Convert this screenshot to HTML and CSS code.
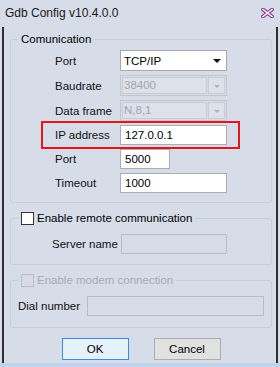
FILE: index.html
```html
<!DOCTYPE html>
<html lang="en">

<head>
  <meta charset="UTF-8" />
  <title>Gdb Config v10.4.0.0</title>
  <link rel="stylesheet" href="styles.css">
</head>

<body>

  <div class="window">

    <!-- Title bar -->
    <div class="titlebar">
      <span class="title">Gdb Config v10.4.0.0</span>
      <svg class="close" width="13" height="10" viewBox="0 0 13 10">
        <path d="M2 1.5 L11 8.5 M11 1.5 L2 8.5" stroke="#8a3d94" stroke-width="3.6" stroke-linecap="square" fill="none" />
        <path d="M2 1.5 L11 8.5 M11 1.5 L2 8.5" stroke="#ffffff" stroke-width="1.4" stroke-linecap="square" fill="none" />
      </svg>
    </div>

    <div class="client">

      <!-- Communication group -->
      <fieldset class="group comm">
        <legend>Comunication</legend>

        <div class="row">
          <span class="label">Port</span>
          <div class="combo">
            <span class="combo-text">TCP/IP</span>
            <span class="arrow"></span>
          </div>
        </div>

        <div class="row">
          <span class="label">Baudrate</span>
          <div class="combo disabled">
            <span class="combo-text">38400</span>
            <span class="combo-btn"><span class="arrow"></span></span>
          </div>
        </div>

        <div class="row">
          <span class="label">Data frame</span>
          <div class="combo disabled">
            <span class="combo-text">N,8,1</span>
            <span class="combo-btn"><span class="arrow"></span></span>
          </div>
        </div>

        <div class="row text-row marked">
          <span class="label">IP address</span>
          <div class="textbox">127.0.0.1</div>
        </div>

        <div class="row text-row">
          <span class="label">Port</span>
          <div class="textbox short">5000</div>
        </div>

        <div class="row text-row">
          <span class="label">Timeout</span>
          <div class="textbox">1000</div>
        </div>
      </fieldset>

      <!-- Remote group -->
      <fieldset class="group remote">
        <legend><span class="check"></span>Enable remote communication</legend>
        <div class="row text-row">
          <span class="label">Server name</span>
          <div class="textbox off"></div>
        </div>
      </fieldset>

      <!-- Modem group -->
      <fieldset class="group modem">
        <legend class="dim"><span class="check off"></span>Enable modem connection</legend>
        <div class="row text-row">
          <span class="label">Dial number</span>
          <div class="textbox off wide"></div>
        </div>
      </fieldset>

      <!-- Buttons -->
      <div class="buttons">
        <button class="btn default">OK</button>
        <button class="btn">Cancel</button>
      </div>

    </div>
  </div>

</body>

</html>
```

FILE: styles.css
```css
body {
  margin: 0;
  font-family: "Liberation Sans", Arial, sans-serif;
  font-size: 11.5px;
  color: #000;
}

.window {
  width: 280px;
  height: 367px;
  background-color: #d7dce9;
  display: flex;
  flex-direction: column;
  box-sizing: border-box;
  border-bottom: 4px solid #bfd3ea;
}

/* Title bar */
.titlebar {
  height: 27px;
  flex: none;
  display: flex;
  align-items: center;
  justify-content: space-between;
  padding: 0 6px 0 5px;
  font-size: 12px;
}

.title {
  color: #1a1a1a;
  margin-top: -2px;
}

.close {
  margin-top: -2px;
}

/* Client area */
.client {
  flex: 1;
  margin: 0 2px;
  border-left: 2px solid #2e2e2e;
  border-right: 2px solid #2e2e2e;
  padding: 0 4px 0 6px;
  display: flex;
  flex-direction: column;
}

.group {
  margin: 0;
  padding: 0;
  border: 1px solid #c8cdd8;
  border-radius: 3px;
  min-width: 0;
}

.group legend {
  margin-left: 7px;
  padding: 0 3px;
  line-height: 14px;
  display: flex;
  align-items: center;
}

.group legend.dim {
  color: #a7abb3;
}

.comm {
  margin-top: 5px;
  padding-top: 4px;
  padding-bottom: 9px;
}

.remote {
  margin-top: 8px;
  padding-top: 9px;
  padding-bottom: 10px;
}

.remote .row {
  padding-left: 41px;
}

.remote .label {
  width: 69px;
}

.remote .textbox {
  width: 106px;
}

.modem {
  margin-top: 8px;
  padding-top: 9px;
  padding-bottom: 11px;
}

.modem .row {
  padding-left: 7px;
}

.modem .label {
  width: 69px;
}

/* Rows */
.row {
  display: flex;
  align-items: center;
  height: 21px;
  margin-bottom: 4px;
  padding-left: 44px;
  position: relative;
}

.row:last-child {
  margin-bottom: 0;
}

.text-row {
  height: 20px;
}

.label {
  width: 65px;
  flex: none;
  color: #111;
}

/* Red marker around the IP address row */
.marked::after {
  content: "";
  position: absolute;
  left: 30px;
  top: -4px;
  width: 195px;
  height: 24px;
  border: 2px solid #e8141b;
}

/* Combo boxes */
.combo {
  width: 107px;
  height: 21px;
  box-sizing: border-box;
  border: 1px solid #a9a9a9;
  background-color: #fff;
  display: flex;
  align-items: center;
  justify-content: space-between;
  padding: 0 5px 0 3px;
}

.arrow {
  width: 0;
  height: 0;
  border-left: 4px solid transparent;
  border-right: 4px solid transparent;
  border-top: 4px solid #111;
  margin-top: 1px;
}

.combo.disabled {
  border-color: #c3c6cd;
  background-color: #d7dce9;
  padding: 1px;
  align-items: stretch;
}

.combo.disabled .combo-text {
  flex: 1;
  border: 1px solid #c9ccd3;
  background-color: #dde1ea;
  color: #a3a6ad;
  padding-left: 1px;
  line-height: 15px;
}

.combo-btn {
  width: 15px;
  margin-left: 1px;
  border: 1px solid #c9ccd3;
  background-color: #dde1ea;
  display: flex;
  align-items: center;
  justify-content: center;
}

.combo-btn .arrow {
  border-top-color: #b0b3ba;
  border-left-width: 3px;
  border-right-width: 3px;
  border-top-width: 3px;
}

/* Text boxes */
.textbox {
  width: 107px;
  height: 20px;
  box-sizing: border-box;
  border: 1px solid #abadb3;
  background-color: #fff;
  padding-left: 4px;
  line-height: 18px;
}

.textbox.short {
  width: 50px;
}

.textbox.off {
  background-color: #d7dce9;
  border-color: #b9bcc3;
}

.textbox.wide {
  width: 177px;
}

/* Check boxes */
.check {
  width: 13px;
  height: 13px;
  box-sizing: border-box;
  border: 1px solid #333;
  background-color: #fff;
  margin-right: 3px;
}

.check.off {
  border-color: #b8bcc4;
  background-color: #d9dce4;
}

/* Buttons */
.buttons {
  display: flex;
  justify-content: center;
  gap: 25px;
  margin-top: 10px;
}

.btn {
  width: 67px;
  height: 22px;
  font-family: "Liberation Sans", Arial, sans-serif;
  font-size: 11.5px;
  color: #000;
  background-color: #e1e1e1;
  border: 1px solid #adadad;
  padding: 0;
}

.btn.default {
  background-color: #e5f1fb;
  border-color: #3c8ce0;
}
```
